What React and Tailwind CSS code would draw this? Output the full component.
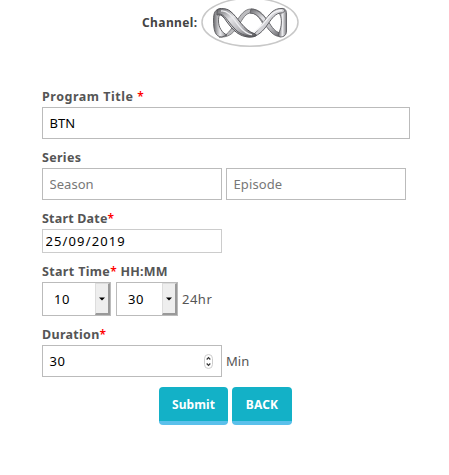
function Logo() {
  return (
    <svg className="block h-[50px] w-[100px] shrink-0" viewBox="0 0 100 50" fill="none">
      <defs>
        <linearGradient id="front" x1="0" y1="0" x2="1" y2="1">
          <stop offset="0" stopColor="#66666a" />
          <stop offset=".35" stopColor="#e4e4e7" />
          <stop offset=".65" stopColor="#b8b8bc" />
          <stop offset="1" stopColor="#505054" />
        </linearGradient>
        <linearGradient id="side" x1="0" y1="0" x2="1" y2="0">
          <stop offset="0" stopColor="#68686c" />
          <stop offset=".5" stopColor="#ededf0" />
          <stop offset="1" stopColor="#7b7b7f" />
        </linearGradient>
      </defs>
      <ellipse cx="50" cy="22.3" rx="48" ry="24" stroke="#c8c8c8" strokeWidth="1.5" />
      {/* rear ribbon rising from the lower left loop */}
      <path d="M19 37C27 37 31 29 36 22C41 14 45 9 51 9C59 9 63 14 67 20L63 24C59 17 56 13 51 13C46 13 43 18 39 25C34 32 30 37 22 37Z" fill="#bcbcbf" stroke="#68686b" strokeWidth=".8" />
      {/* left end */}
      <path d="M21 8.500C15 9 13.500 13 13.500 20C13.500 30 15 37 22 37L27 35C22 33 18.500 27 18.500 21C18.500 16 19.500 13 23 12Z" fill="url(#side)" stroke="#58585b" strokeWidth=".9" />
      {/* ribbon from the centre to the lower right */}
      <path d="M51 9C59 9 65 17 70 24C73 29 77 33 81 33L85 35C82 37.500 76 37 72 33C65 27 60 13 50 13Z" fill="url(#front)" stroke="#606064" strokeWidth=".9" />
      {/* right end */}
      <path d="M81 8.500C85 8 86.500 10 86.500 14V31C86.500 35 84 37 80 37C77 36 79 33 80 30C82 24 82 17 79 13Z" fill="url(#side)" stroke="#606064" strokeWidth=".9" />
      {/* rising right ribbon */}
      <path d="M46 36.500C54 37 59 29 64 22C69 14 74 8 82 8.500C86 9 85 13 81 13C76 13 72 18 68 24C63 31 58 37 49 37Z" fill="#d2d2d6" stroke="#606064" strokeWidth="1" />
      <path d="M51 34C58 31 63 24 68 18C72 13 76 10 82 10.500" stroke="#f3f3f5" strokeWidth="1.500" />
      {/* front ribbon crossing from the upper left loop */}
      <path d="M17 10C20 8 26 8 30 11C38 17 43 30 55 34C58 35 56 37 50 37C39 37 33 30 27 22C23 16 21 14 17 15Z" fill="url(#front)" stroke="#525256" strokeWidth="1" />
      <path d="M21 11C29 10 34 20 39 26C43 31 47 34 52 35" stroke="#ededf0" strokeWidth="1.300" />
      <path d="M18 14C24 13 28 22 34 28C39 34 45 36 52 36" stroke="#5c5c60" strokeWidth="1" />
    </svg>
  );
}

const label = "flex h-[18px] items-center whitespace-pre font-bold text-[12.5px] text-[#555]";
const field = "box-border h-8 border border-[#bbb] bg-white px-[6.5px] text-[13px] text-black outline-none placeholder:text-[#777] placeholder:opacity-100";

function Star() {
  return <span className="text-[12px] font-semibold text-[#f00]">*</span>;
}

function TimeSelect({ value, className }) {
  return (
    <div className={"flex h-[34px] border border-[#bbb] text-[13px] text-black " + className}>
      <span className="flex flex-1 items-center pt-px pl-[11px] tracking-[0.5px]">{value}</span>
      <span className="flex w-[15px] items-center justify-center border-r-2 border-b-2 border-t border-l border-[#999] border-t-[#ddd] border-l-[#ddd] bg-[#eee]">
        <svg className="h-[4px] w-[6px]" viewBox="0 0 6 4"><path d="M0 0.5H6L3 3.5Z" fill="#000" /></svg>
      </span>
    </div>
  );
}

export default function App() {
  return (
    <main className="h-[475px] w-[449px] overflow-hidden bg-white font-['Noto_Sans',sans-serif] text-[#555]">
      <header className="flex h-[88px] items-start pl-[142px]">
        <span className="mt-[14px] w-[58px] whitespace-nowrap text-[12px] leading-[18px] font-bold tracking-[0.4px] text-[#444]">Channel:</span>
        <Logo />
      </header>
      <form className="pl-[42px]">
        <div className={label + " mb-px tracking-[0.52px]"}>Program Title <Star /></div>
        <input className={field + " block w-[368px]"} defaultValue="BTN" />
        <div className={label + " mt-[10px] mb-px tracking-[0.3px]"}>Series</div>
        <div className="flex gap-1">
          <input className={field + " w-[180px] tracking-[0.05px]"} placeholder="Season" />
          <input className={field + " w-[180px] tracking-[0.1px]"} placeholder="Episode" />
        </div>
        <div className={label + " mt-[10px] mb-px tracking-[0.2px]"}>Start Date<Star /></div>
        <input className="block h-6 w-[180px] border border-[#ccc] px-[2.5px] text-[13px] tracking-[1.12px] text-black outline-none" defaultValue="25/09/2019" />
        <div className={label + " mt-[10px] mb-px tracking-[0.35px]"}>Start Time<Star /><span className="tracking-[0.2px]"> HH:MM</span></div>
        <div className="flex items-center">
          <TimeSelect value="10" className="w-[69px]" />
          <TimeSelect value="30" className="ml-[5px] w-[62px]" />
          <span className="ml-1 pt-px text-[13px] tracking-[0.5px]">24hr</span>
        </div>
        <div className={label + " mt-[10px] mb-px tracking-[0.3px]"}>Duration<Star /></div>
        <div className="flex items-center">
          <div className={field + " flex w-[180px] items-center justify-between pr-[8px]"}>
            <span className="pt-px tracking-[0.5px]">30</span>
            <svg className="h-[15px] w-[9px]" viewBox="0 0 9 15" fill="none">
              <rect x=".5" y=".5" width="8" height="14" rx="4" stroke="#ccc" />
              <path d="M2.7 5.5L4.5 3.7L6.3 5.5M2.7 9.5L4.5 11.3L6.3 9.5" stroke="#333" strokeWidth="1.2" />
            </svg>
          </div>
          <span className="ml-1 pt-px text-[13px]">Min</span>
        </div>
        <div className="mt-[10px] ml-[117px] flex gap-1 text-[12px] font-bold text-white">
          <button type="button" className="h-[38px] w-[69px] rounded-[4px] border-b-4 border-[#5bc0eb] bg-[#13b1c7] pt-px tracking-[0.1px]">Submit</button>
          <button type="button" className="h-[38px] w-[60px] rounded-[4px] border-b-4 border-[#5bc0eb] bg-[#13b1c7] pt-px tracking-[0.2px]">BACK</button>
        </div>
      </form>
    </main>
  );
}
